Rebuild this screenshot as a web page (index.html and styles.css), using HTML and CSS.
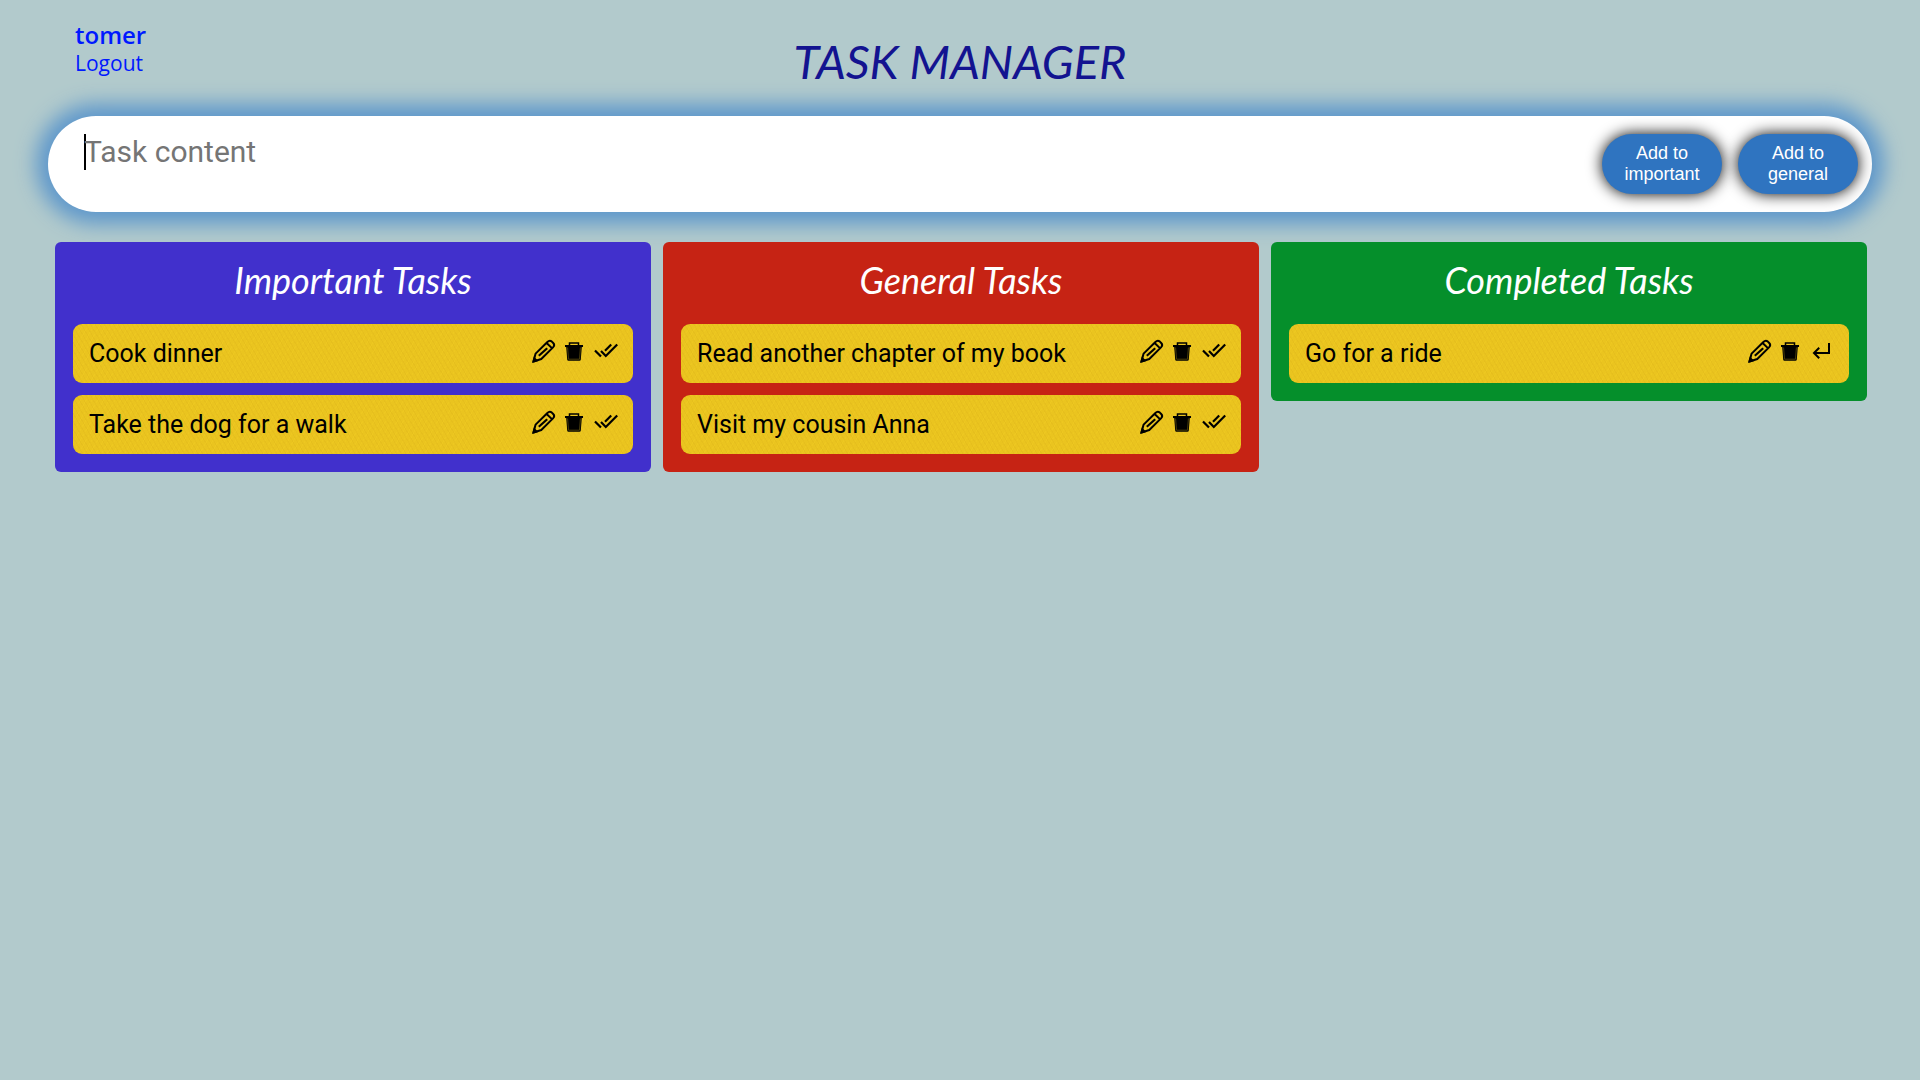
FILE: index.html
```
<!DOCTYPE html>
<html lang="en">
<head>
<meta charset="utf-8">
<meta name="viewport" content="width=device-width, initial-scale=1">
<title>Task Manager</title>
<link rel="stylesheet" href="styles.css">
</head>
<body>
<svg class="sprite" aria-hidden="true">
  <symbol id="pencil" viewBox="0 0 24 24">
    <path d="M1.500 22.500 3.600 14.600 15.400 3Q17.600 .8 19.800 2.600L21.200 4Q23.200 6 21 8.400L9.300 20Z M14.600 4l5.600 5.400" fill="none" stroke="currentColor" stroke-width="2" stroke-linejoin="round"/>
    <path d="M6.800 16.800l8.400-7.600" fill="none" stroke="currentColor" stroke-width="2.200"/>
    <path d="M0 24 1.800 17.500 6.500 22Z"/>
  </symbol>
  <symbol id="trash" viewBox="0 0 24 24">
    <path d="M6.500 7V4h9v3" fill="none" stroke="currentColor" stroke-width="1.500"/>
    <path d="M2 6h18v2h-1.200l-1 12.500q-.1 1.200-1.300 1.200h-11q-1.200 0-1.300-1.200L3.200 8H2z"/>
    <path d="M4.600 8.500l.9 11.700h11l.9-11.700" fill="none" stroke="#4a3e0a" stroke-width="1"/>
  </symbol>
  <symbol id="checks" viewBox="0 0 24 24">
    <path d="M1 11.500l6 6M7 12l4.800 5L23.200 5.500M11 11.700l6.200-6.200" fill="none" stroke="currentColor" stroke-width="2.200"/>
  </symbol>
  <symbol id="return" viewBox="0 0 24 24">
    <path d="M19 4v10H4.500M9.200 8.800 4 14l5.200 5.200" fill="none" stroke="currentColor" stroke-width="2"/>
  </symbol>
</svg>
<header class="header">
  <div class="user">
    <span class="user-name">tomer</span>
    <a class="logout" href="#">Logout</a>
  </div>
  <h1 class="title">TASK MANAGER</h1>
</header>
<main>
  <form class="new-task">
    <textarea class="task-input" placeholder="Task content" aria-label="Task content"></textarea>
    <button class="add" type="button">Add to important</button>
    <button class="add" type="button">Add to general</button>
  </form>
  <div class="board">
    <section class="column important">
      <h2 class="column-title">Important Tasks</h2>
      <ul class="tasks">
        <li class="task"><span class="task-text">Cook dinner</span>
          <button class="icon" aria-label="Edit"><svg><use href="#pencil"/></svg></button>
          <button class="icon" aria-label="Delete"><svg><use href="#trash"/></svg></button>
          <button class="icon" aria-label="Complete"><svg><use href="#checks"/></svg></button></li>
        <li class="task"><span class="task-text">Take the dog for a walk</span>
          <button class="icon" aria-label="Edit"><svg><use href="#pencil"/></svg></button>
          <button class="icon" aria-label="Delete"><svg><use href="#trash"/></svg></button>
          <button class="icon" aria-label="Complete"><svg><use href="#checks"/></svg></button></li>
      </ul>
    </section>
    <section class="column general">
      <h2 class="column-title">General Tasks</h2>
      <ul class="tasks">
        <li class="task"><span class="task-text">Read another chapter of my book</span>
          <button class="icon" aria-label="Edit"><svg><use href="#pencil"/></svg></button>
          <button class="icon" aria-label="Delete"><svg><use href="#trash"/></svg></button>
          <button class="icon" aria-label="Complete"><svg><use href="#checks"/></svg></button></li>
        <li class="task"><span class="task-text">Visit my cousin Anna</span>
          <button class="icon" aria-label="Edit"><svg><use href="#pencil"/></svg></button>
          <button class="icon" aria-label="Delete"><svg><use href="#trash"/></svg></button>
          <button class="icon" aria-label="Complete"><svg><use href="#checks"/></svg></button></li>
      </ul>
    </section>
    <section class="column completed">
      <h2 class="column-title">Completed Tasks</h2>
      <ul class="tasks">
        <li class="task"><span class="task-text">Go for a ride</span>
          <button class="icon" aria-label="Edit"><svg><use href="#pencil"/></svg></button>
          <button class="icon" aria-label="Delete"><svg><use href="#trash"/></svg></button>
          <button class="icon" aria-label="Restore"><svg><use href="#return"/></svg></button></li>
      </ul>
    </section>
  </div>
</main>
</body>
</html>
```
FILE: styles.css
```
* {
  box-sizing: border-box;
}

body {
  margin: 0;
  min-height: 100vh;
  background: #b2cacc;
  font-family: Roboto, "Open Sans", sans-serif;
}

.sprite {
  display: none;
}

.header {
  display: grid;
  grid-template-columns: 1fr auto 1fr;
  height: 116px;
  padding: 20px 75px 0;
}

.user {
  display: flex;
  flex-direction: column;
  align-items: flex-start;
  font-family: "Open Sans", sans-serif;
  color: #0019ff;
}

.user-name {
  font-size: 24px;
  font-weight: 600;
  line-height: 29px;
}

.logout {
  font-size: 21px;
  line-height: 29px;
  color: inherit;
  text-decoration: none;
}

.title {
  margin: 0;
  padding-top: 11px;
  font: italic 400 47px/60px Lato, sans-serif;
  color: #131390;
}

.new-task {
  display: flex;
  align-items: center;
  gap: 16px;
  margin: 0 48px 30px;
  padding: 18px 14px 18px 36px;
  border-radius: 48px;
  background: #fff;
  box-shadow: 0 0 20px 12px #5f98cb;
}

.task-input {
  flex: 1;
  height: 60px;
  padding: 0;
  border: 0;
  outline: 0;
  resize: none;
  /* text cursor at the start of the empty field */
  background: linear-gradient(#000, #000) 0 0 / 2px 36px no-repeat;
  font: 400 30px/36px Roboto, sans-serif;
}

.task-input::placeholder {
  color: #757575;
}

.add {
  width: 120px;
  height: 60px;
  padding: 0 20px;
  border: 0;
  border-radius: 30px;
  background: #2f74c0;
  color: #fff;
  font: 18px/21px "Liberation Sans", Arial, sans-serif;
  box-shadow: 0 0 15px #000;
}

.board {
  display: grid;
  grid-template-columns: repeat(3, 1fr);
  align-items: start;
  gap: 12px;
  padding: 0 53px 48px 55px;
}

.column {
  padding: 18px;
  border-radius: 6px;
}

.important {
  background: #4130cc;
}

.general {
  background: #c62314;
}

.completed {
  background: #058f2b;
}

.column-title {
  margin: 0 0 24px;
  font: italic 400 36px/40px Lato, sans-serif;
  color: #fff;
  text-align: center;
}

.tasks {
  display: grid;
  gap: 12px;
  margin: 0;
  padding: 0;
  list-style: none;
}

.task {
  display: flex;
  align-items: flex-start;
  gap: 7px;
  padding: 15px 15px 15px 16px;
  border-radius: 9px;
  background-color: #eac41f;
  background-image:
    repeating-linear-gradient(60deg, #e2ba1c80 0 1px, transparent 1px 4px),
    repeating-linear-gradient(-60deg, #f0cb2280 0 1px, transparent 1px 5px);
}

.task-text {
  flex: 1;
  font-size: 25px;
  line-height: 29px;
  color: #000;
}

.icon {
  width: 24px;
  height: 24px;
  padding: 0;
  border: 0;
  background: none;
  color: #000;
}

.icon svg {
  display: block;
  width: 24px;
  height: 24px;
}
```
